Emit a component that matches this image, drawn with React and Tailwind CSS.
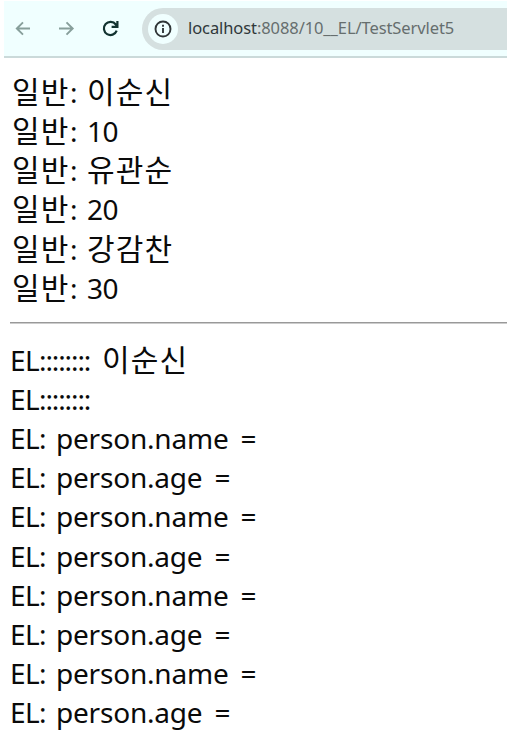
const LATIN = "font-['Noto_Sans','Noto_Sans_CJK_KR',sans-serif]";
const HANGUL = "font-['Noto_Sans_CJK_KR',sans-serif]";

const plainRows = ['이순신', '10', '유관순', '20', '강감찬', '30'];
const fields = ['name', 'age', 'name', 'age', 'name', 'age', 'name', 'age'];

function Hangul({ children }) {
  return <span className={`${HANGUL} text-[30px] leading-[30px] tracking-[1.1px]`}>{children}</span>;
}

function PlainRow({ value }) {
  const numeric = /^\d+$/.test(value);
  return (
    <div className="flex h-[39.15px] items-baseline pl-[12px] leading-[39px] whitespace-nowrap">
      <span className="w-[58px] leading-[30px]"><Hangul>일반</Hangul></span>
      <span className="w-[17px]">:</span>
      {numeric ? <span className="tracking-[-0.5px]">{value}</span> : <Hangul>{value}</Hangul>}
    </div>
  );
}

function ElRow({ children }) {
  return (
    <div className="flex h-[39.15px] items-baseline pl-[10px] leading-[39px] whitespace-nowrap">
      <span className="w-[29px] tracking-[-0.6px]">EL</span>
      {children}
    </div>
  );
}

function Toolbar() {
  return (
    <header className="mt-px ml-1 flex h-[57px] items-center border-b-2 border-[#cbdada] bg-[#f0ffff] pl-[9px]">
      <svg className="h-5 w-5 shrink-0" viewBox="0 0 20 20" fill="none" stroke="#879f9b" strokeWidth="1.9">
        <path d="M17 9.5H4M10 3.3 3.8 9.5 10 15.7" />
      </svg>
      <svg className="ml-[24px] h-5 w-5 shrink-0" viewBox="0 0 20 20" fill="none" stroke="#879f9b" strokeWidth="1.9">
        <path d="M2 9.5h13M9.5 3.3 15.7 9.5l-6.2 6.2" />
      </svg>
      <svg className="ml-[24px] h-5 w-5 shrink-0" viewBox="0 0 20 20" fill="none" stroke="#123330" strokeWidth="2.2">
        <path d="M15.7 11.7A6.6 6.6 0 1 1 14.8 5.5l1.2 1.5M16.4 2v5.8h-5.8" />
      </svg>
      <div className="ml-[21px] flex h-[42px] flex-1 items-center rounded-l-full bg-[#d5e0e0] pl-[6px]">
        <span className="flex h-[30px] w-[30px] shrink-0 items-center justify-center rounded-full bg-[#f0ffff]">
          <svg className="h-5 w-5" viewBox="0 0 20 20" fill="none" stroke="#303638" strokeWidth="1.9">
            <circle cx="10" cy="10" r="7.5" />
            <path d="M10 9v5M10 5.8v2" />
          </svg>
        </span>
        <span className="ml-[10px] pb-px text-[16.5px] leading-[22px] tracking-[-0.09px] whitespace-nowrap text-[#666e6e]">
          <span className="text-[#30383a]">localhost</span>:8088/10__EL/TestServlet5
        </span>
      </div>
    </header>
  );
}

export default function App() {
  return (
    <div className={`h-[749px] w-[507px] overflow-hidden bg-white text-[28px] text-[#0a0a0a] ${LATIN}`}>
      <Toolbar />
      <main>
        <section className="pt-[15px]">
          {plainRows.map((value) => <PlainRow key={value} value={value} />)}
        </section>
        <hr className="mt-[14px] ml-[10px] border-t border-b border-t-[#999] border-b-[#ccc]" />
        <section className="pt-[17px]">
          <ElRow>
            <span className="w-[63px] tracking-[-1.1px]">::::::::</span>
            <Hangul>이순신</Hangul>
          </ElRow>
          <ElRow>
            <span className="tracking-[-1.1px]">::::::::</span>
          </ElRow>
          {fields.map((field, i) => (
            <ElRow key={i}>
              <span className="w-[17px]">:</span>
              <span className="tracking-[-0.2px]">person.{field}</span>
              <span className="ml-[12px]">=</span>
            </ElRow>
          ))}
        </section>
      </main>
    </div>
  );
}
